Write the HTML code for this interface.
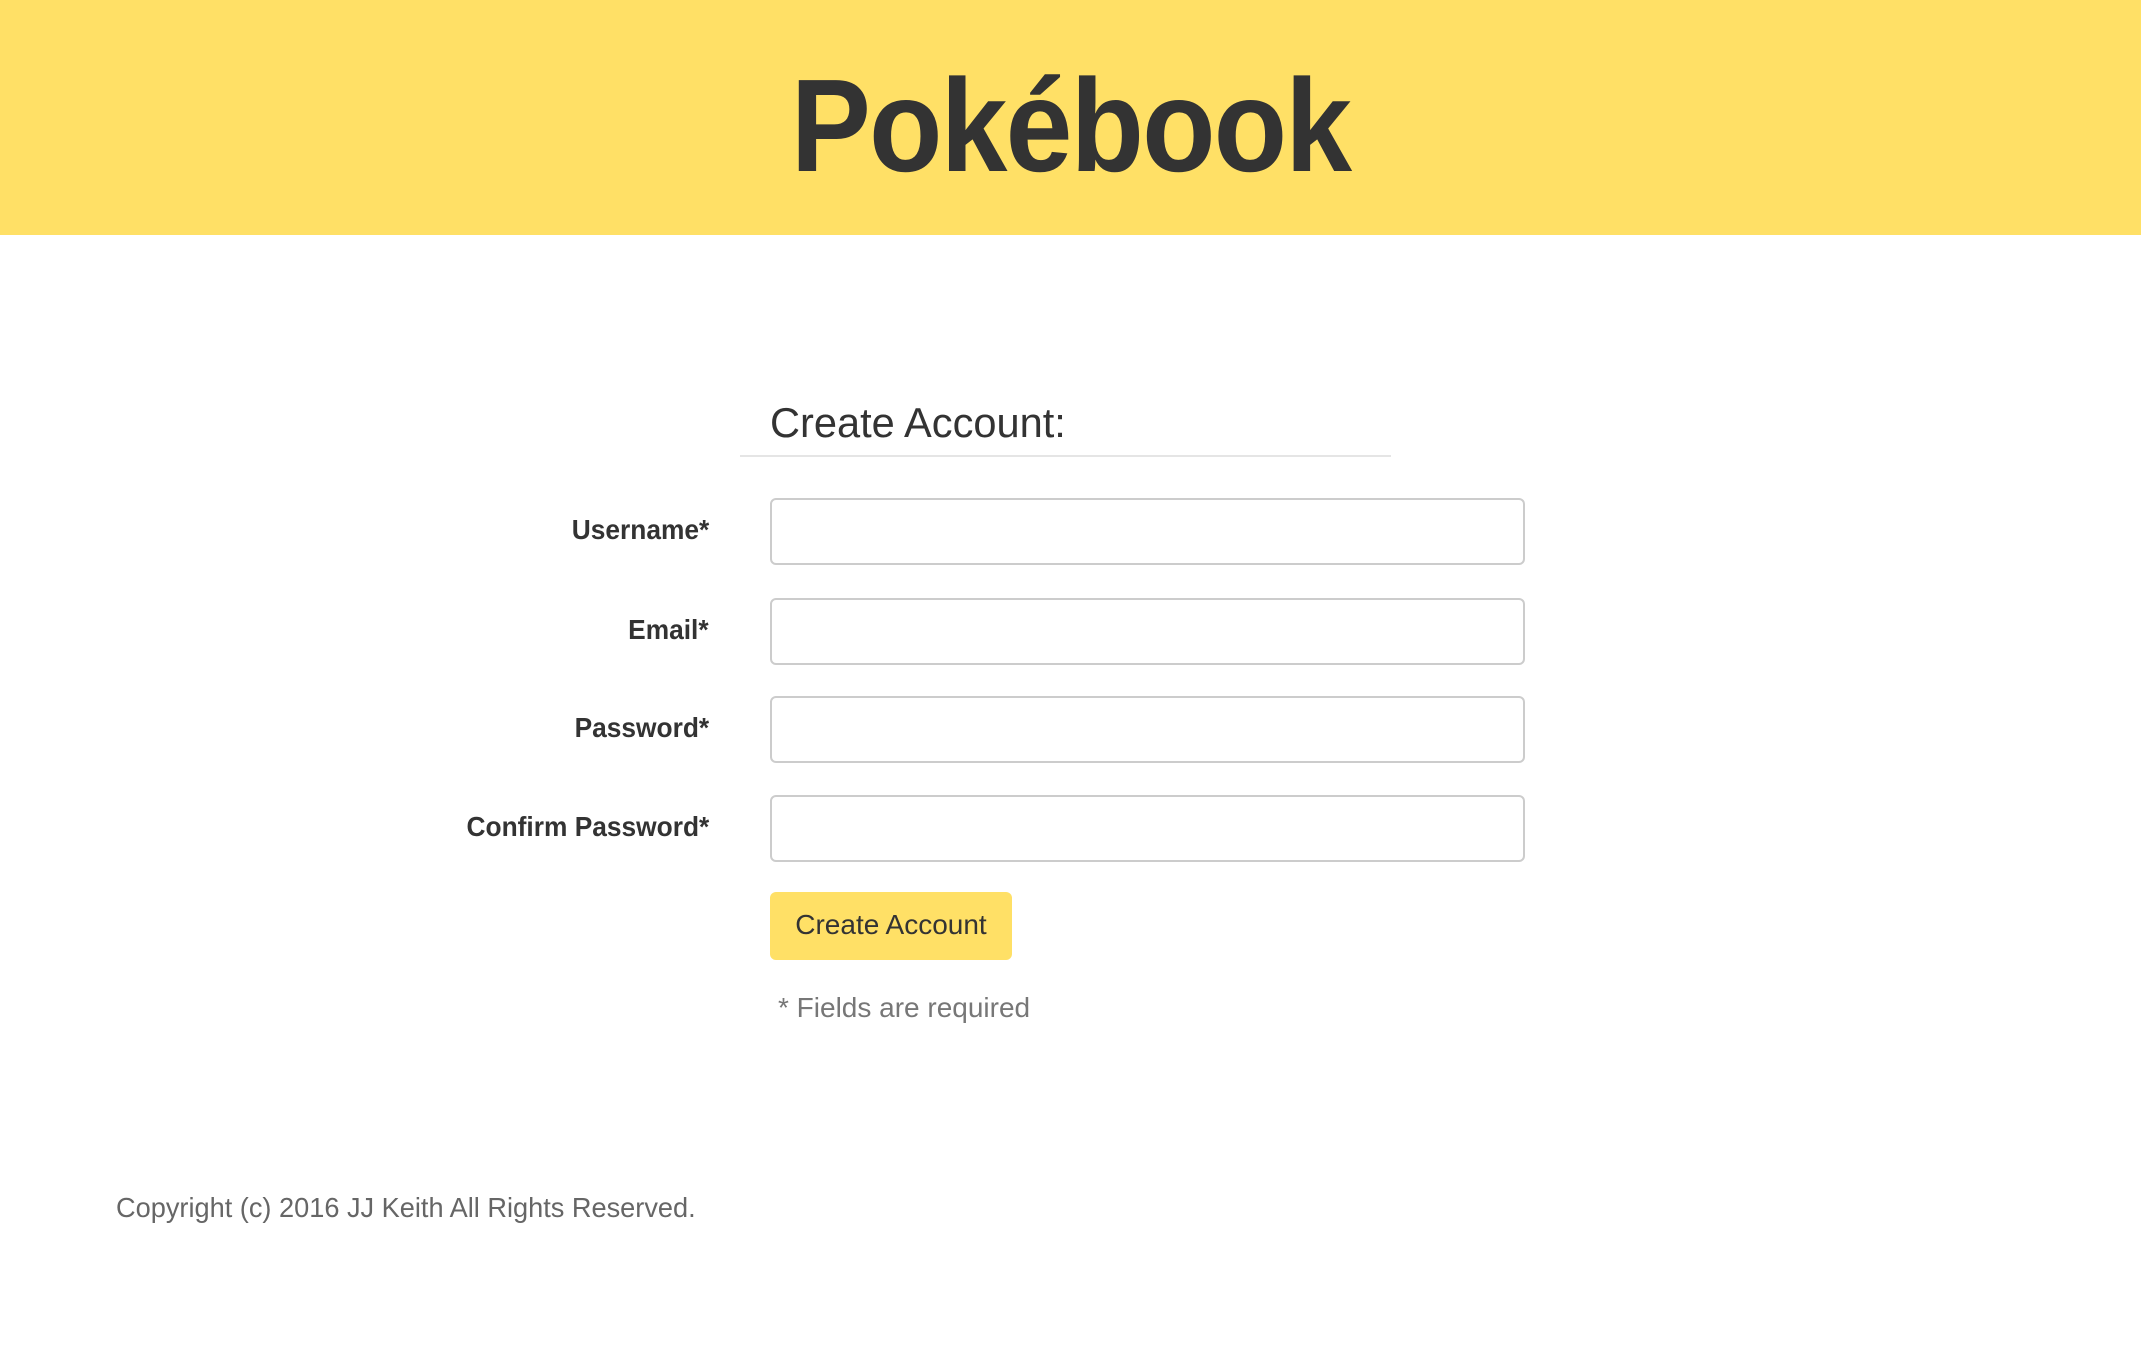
<!DOCTYPE html>
<html><head><style>
body{margin:0;width:2141px;height:1354px;background:#fff;font-family:"Liberation Sans",sans-serif;color:#333;position:relative;overflow:hidden}
.hdr{position:absolute;left:0;top:0;width:2141px;height:235px;background:#ffe066}
.title{position:absolute;left:0;width:2141px;top:51px;text-align:center;font-weight:bold;font-size:132px;line-height:150px;transform:scaleX(0.91);letter-spacing:-2px}
.abs{position:absolute;white-space:nowrap}
.h{left:770px;top:398px;font-size:42px;line-height:50px;transform:scaleX(0.99);transform-origin:left}
.hr{position:absolute;left:740px;top:455px;width:651px;height:2px;background:#e5e5e5}
.lbl{right:1432px;font-weight:bold;font-size:28px;line-height:34px;transform:scaleX(0.94);transform-origin:right}
.in{position:absolute;left:770px;width:751px;height:63px;border:2px solid #ccc;border-radius:6px;box-sizing:content-box}
.btn{position:absolute;left:770px;top:892px;width:242px;height:68px;background:#ffe066;border-radius:6px;font-size:28px;line-height:66px;text-align:center}
.btn span{display:inline-block;transform:scaleX(1.0)}
</style></head><body>
<div class="hdr"><div class="title">Pokébook</div></div>
<div class="abs h">Create Account:</div>
<div class="hr"></div>
<div class="abs lbl" style="top:513px">Username*</div>
<div class="abs lbl" style="top:613px">Email*</div>
<div class="abs lbl" style="top:711px">Password*</div>
<div class="abs lbl" style="top:810px">Confirm Password*</div>
<div class="in" style="top:498px"></div>
<div class="in" style="top:598px"></div>
<div class="in" style="top:696px"></div>
<div class="in" style="top:795px"></div>
<div class="btn"><span>Create Account</span></div>
<div class="abs" style="left:778px;top:991px;font-size:28px;line-height:34px;color:#777;transform:scaleX(1.0);transform-origin:left">* Fields are required</div>
<div class="abs" style="left:116px;top:1191px;font-size:28px;line-height:34px;color:#666;transform:scaleX(0.97);transform-origin:left">Copyright (c) 2016 JJ Keith All Rights Reserved.</div>
</body></html>
